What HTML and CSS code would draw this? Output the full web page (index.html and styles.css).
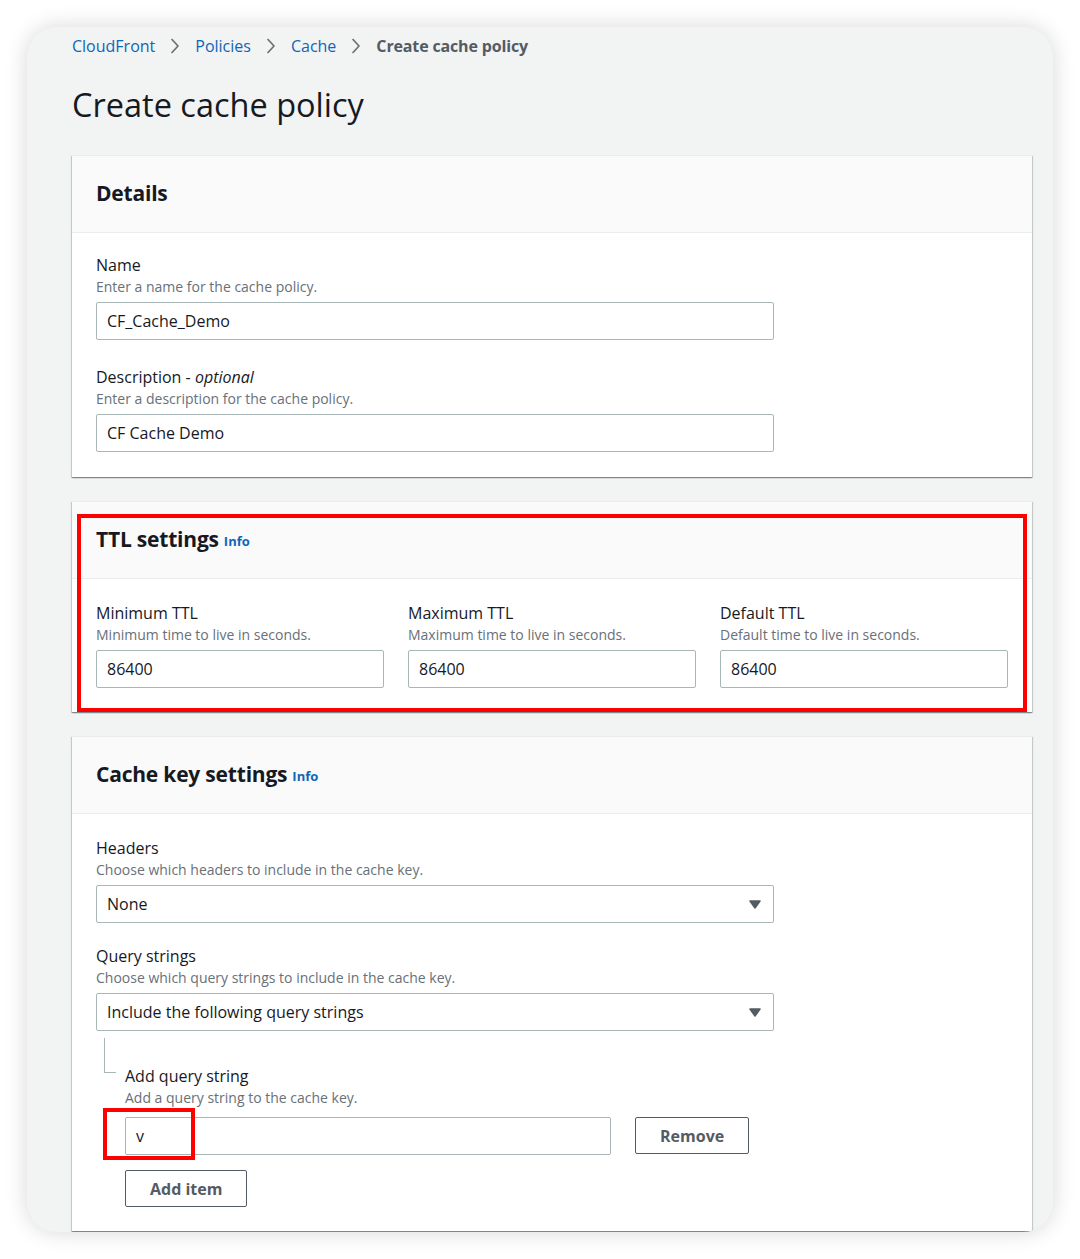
FILE: index.html
```html
<!DOCTYPE html>
<html lang="en">
<head>
<meta charset="utf-8">
<title>Create cache policy</title>
<link rel="stylesheet" href="styles.css">
</head>
<body>
<div class="window">
  <nav class="crumbs">
    <a class="crumb">CloudFront</a>
    <svg class="chev" viewBox="0 0 10 16" width="10" height="16"><path d="M2 1.5 L8 8 L2 14.5"/></svg>
    <a class="crumb">Policies</a>
    <svg class="chev" viewBox="0 0 10 16" width="10" height="16"><path d="M2 1.5 L8 8 L2 14.5"/></svg>
    <a class="crumb">Cache</a>
    <svg class="chev" viewBox="0 0 10 16" width="10" height="16"><path d="M2 1.5 L8 8 L2 14.5"/></svg>
    <span class="crumb current">Create cache policy</span>
  </nav>

  <h1 class="page-title">Create cache policy</h1>

  <section class="panel">
    <header class="panel-head"><h2 class="panel-title">Details</h2></header>
    <div class="panel-body details-body">
      <div class="field">
        <div class="label">Name</div>
        <div class="desc">Enter a name for the cache policy.</div>
        <div class="input wide">CF_Cache_Demo</div>
      </div>
      <div class="field next">
        <div class="label">Description - <i>optional</i></div>
        <div class="desc">Enter a description for the cache policy.</div>
        <div class="input wide">CF Cache Demo</div>
      </div>
    </div>
  </section>

  <section class="panel">
    <header class="panel-head"><h2 class="panel-title">TTL settings</h2><a class="info">Info</a></header>
    <div class="panel-body cols">
      <div class="field">
        <div class="label">Minimum TTL</div>
        <div class="desc">Minimum time to live in seconds.</div>
        <div class="input">86400</div>
      </div>
      <div class="field">
        <div class="label">Maximum TTL</div>
        <div class="desc">Maximum time to live in seconds.</div>
        <div class="input">86400</div>
      </div>
      <div class="field">
        <div class="label">Default TTL</div>
        <div class="desc">Default time to live in seconds.</div>
        <div class="input">86400</div>
      </div>
    </div>
    <div class="mark mark-ttl"></div>
  </section>

  <section class="panel last">
    <header class="panel-head"><h2 class="panel-title">Cache key settings</h2><a class="info">Info</a></header>
    <div class="panel-body key-body">
      <div class="field">
        <div class="label">Headers</div>
        <div class="desc">Choose which headers to include in the cache key.</div>
        <div class="input wide select">None
          <svg class="caret" viewBox="0 0 12 9" width="12" height="9"><path d="M1 1 H11 L6 8 Z"/></svg>
        </div>
      </div>
      <div class="field next2">
        <div class="label">Query strings</div>
        <div class="desc">Choose which query strings to include in the cache key.</div>
        <div class="input wide select">Include the following query strings
          <svg class="caret" viewBox="0 0 12 9" width="12" height="9"><path d="M1 1 H11 L6 8 Z"/></svg>
        </div>
      </div>
      <div class="attr-editor">
        <div class="label">Add query string</div>
        <div class="desc">Add a query string to the cache key.</div>
        <div class="attr-row">
          <div class="input attr-input">v<div class="mark mark-v"></div></div>
          <button class="btn">Remove</button>
        </div>
        <button class="btn add">Add item</button>
      </div>
    </div>
  </section>
</div>
</body>
</html>
```

FILE: styles.css
```css
* { box-sizing: border-box; }

html, body {
  margin: 0;
  padding: 0;
  background: #ffffff;
}

body {
  font-family: "Open Sans", "Noto Sans", sans-serif;
  color: #16191f;
  padding: 27px;
}

.window {
  position: relative;
  width: 1026px;
  height: 1205px;
  background: #f2f3f3;
  border-radius: 30px;
  overflow: hidden;
  box-shadow: 0 0 22px rgba(0, 0, 0, 0.16);
  padding: 8px 21px 0 45px;
}

.crumbs {
  display: flex;
  align-items: center;
  height: 22px;
  font-size: 16px;
  line-height: 22px;
}

.crumb {
  color: #0f66b8;
  text-decoration: none;
}

.crumb.current {
  color: #545b64;
  font-weight: 700;
  letter-spacing: -0.15px;
}

.chev {
  margin: 0 15px 0 15px;
  fill: none;
  stroke: #687078;
  stroke-width: 1.7;
  stroke-linecap: round;
  stroke-linejoin: round;
}

.page-title {
  margin: 28px 0 30px;
  font-size: 32.5px;
  line-height: 40px;
  font-weight: 400;
  color: #16191f;
}

.panel {
  position: relative;
  background: #ffffff;
  border-top: 1px solid #eaeded;
  box-shadow: 0 1px 1px 0 rgba(0, 28, 36, 0.3), 1px 1px 1px 0 rgba(0, 28, 36, 0.15), -1px 1px 1px 0 rgba(0, 28, 36, 0.15);
  margin-bottom: 24px;
}

.panel-head {
  height: 77px;
  background: #fafafa;
  border-bottom: 1px solid #eaeded;
  padding: 0 24px 3px;
  display: flex;
  align-items: center;
  gap: 5px;
}

.panel-title {
  margin: 0;
  font-size: 21px;
  line-height: 28px;
  font-weight: 700;
  letter-spacing: -0.2px;
  color: #16191f;
}

.info {
  font-size: 13px;
  font-weight: 700;
  color: #0f66b8;
  line-height: 28px;
  padding-top: 4px;
}

.panel-body {
  padding: 23px 24px 24px;
}

.details-body {
  padding: 21px 24px 25px;
}

.cols {
  display: grid;
  grid-template-columns: 288px 288px 288px;
  column-gap: 24px;
}

.label {
  font-size: 16px;
  line-height: 22px;
  color: #16191f;
}

.label i {
  font-style: italic;
}

.desc {
  font-size: 14px;
  line-height: 22px;
  color: #687078;
}

.input {
  position: relative;
  margin-top: 4px;
  height: 38px;
  border: 1px solid #aab7b8;
  border-radius: 2px;
  background: #ffffff;
  padding: 0 10px;
  display: flex;
  align-items: center;
  font-size: 16px;
  color: #16191f;
}

.input.wide {
  width: 678px;
}

.field.next {
  margin-top: 26px;
}

.field.next2 {
  margin-top: 22px;
}

.select {
  justify-content: space-between;
}

.caret {
  fill: #545b64;
  stroke: #545b64;
  stroke-width: 1.5;
  stroke-linejoin: round;
  margin-right: 2px;
}

.attr-editor {
  position: relative;
  margin-top: 7px;
  padding: 27px 0 0 29px;
}

.attr-editor::before {
  content: "";
  position: absolute;
  left: 8px;
  top: 0;
  width: 11px;
  height: 34px;
  border-left: 1px solid #aab7b8;
  border-bottom: 1px solid #aab7b8;
}

.attr-row {
  display: flex;
  align-items: flex-start;
  gap: 24px;
  margin-top: 8px;
}

.attr-input {
  width: 486px;
  margin-top: 0;
}

.btn {
  height: 37px;
  padding: 0 24px;
  border: 1px solid #545b64;
  border-radius: 2px;
  background: #ffffff;
  font-family: "Open Sans", "Noto Sans", sans-serif;
  font-size: 16px;
  font-weight: 700;
  color: #545b64;
}

.btn.add {
  display: block;
  margin-top: 15px;
}

.mark {
  position: absolute;
  border: 4px solid #ff0000;
  pointer-events: none;
}

.mark-ttl {
  left: 5px;
  top: 12px;
  width: 950px;
  height: 198px;
}

.mark-v {
  left: -23px;
  top: -10px;
  width: 92px;
  height: 52px;
}
```
